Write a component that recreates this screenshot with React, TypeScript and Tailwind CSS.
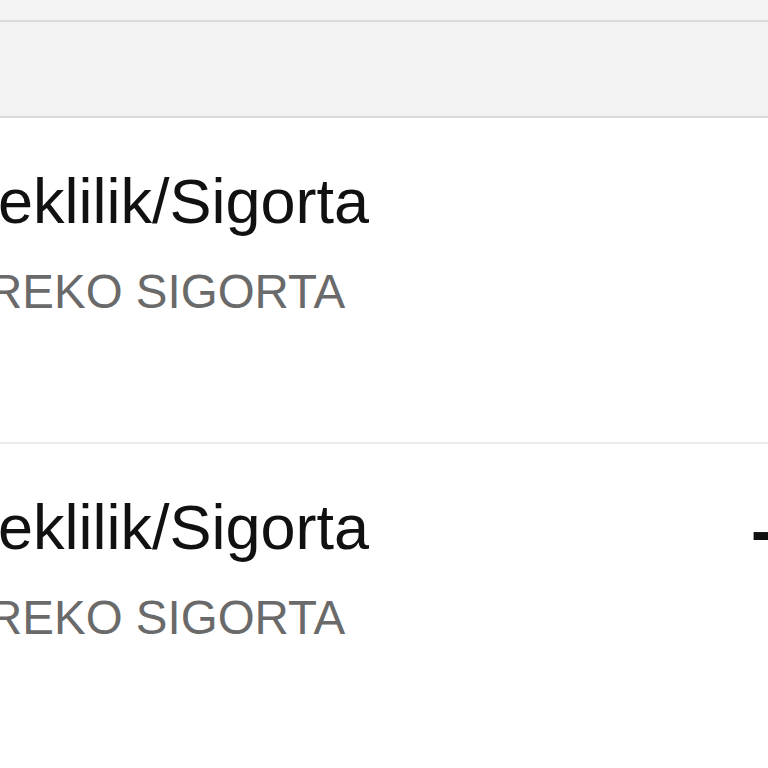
const rows = [
    { title: "eklilik/Sigorta", subtitle: "REKO SIGORTA", amount: "" },
    { title: "eklilik/Sigorta", subtitle: "REKO SIGORTA", amount: "-" },
];

const App = () => {
    return (
        <div
            className="w-[768px] h-[768px] overflow-hidden bg-white"
            style={{ fontFamily: '"Liberation Sans", Arial, sans-serif' }}
        >
            <div className="h-[20px] bg-[#f4f4f4]" />
            <div className="h-[98px] bg-[#f3f3f3] border-y-[2px] border-[#dadada]" />
            {rows.map((row, i) => (
                <div
                    key={i}
                    className="h-[326px] flex flex-row items-start border-b-[2px] border-[#ececec]"
                >
                    <div className="flex-1 flex flex-col pt-[52px] -ml-[2px] whitespace-nowrap">
                        <div className="text-[63px] leading-none text-[#111111]">
                            {row.title}
                        </div>
                        <div className="text-[47.5px] leading-none text-[#6a6a6a] mt-[35px] -ml-[10px]">
                            {row.subtitle}
                        </div>
                    </div>
                    <div className="w-[16px] pt-[53px] overflow-hidden whitespace-nowrap text-[66px] leading-none text-[#111111]">
                        <span className="-ml-[1px] font-bold">{row.amount}</span>
                    </div>
                </div>
            ))}
        </div>
    );
};

export default App;
